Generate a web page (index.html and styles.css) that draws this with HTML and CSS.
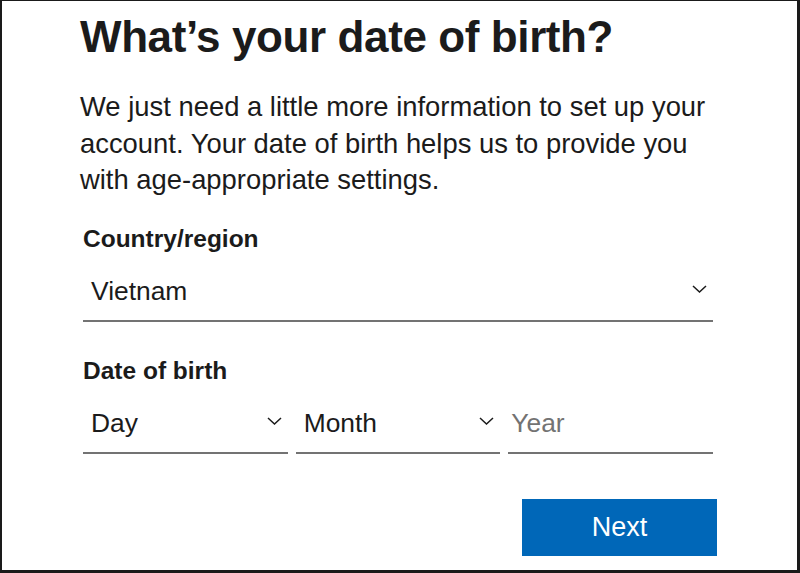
FILE: index.html
```html
<!DOCTYPE html>
<html lang="en">
<head>
<meta charset="utf-8">
<title>What's your date of birth?</title>
<link rel="stylesheet" href="styles.css">
</head>
<body>
<div class="frame">
  <h1 class="title">What’s your date of birth?</h1>
  <p class="intro">We just need a little more information to set up your account. Your date of birth helps us to provide you with age-appropriate settings.</p>
  <div class="form">
    <div class="label">Country/region</div>
    <div class="field field-wide">
      <span class="value">Vietnam</span>
      <svg class="chev" width="15" height="8" viewBox="0 0 15 8"><polyline points="1,1 7.5,7 14,1" fill="none" stroke="#1b1b1b" stroke-width="1.5"/></svg>
    </div>
    <div class="label label-dob">Date of birth</div>
    <div class="dob-row">
      <div class="field">
        <span class="value">Day</span>
        <svg class="chev" width="15" height="8" viewBox="0 0 15 8"><polyline points="1,1 7.5,7 14,1" fill="none" stroke="#1b1b1b" stroke-width="1.5"/></svg>
      </div>
      <div class="field">
        <span class="value">Month</span>
        <svg class="chev" width="15" height="8" viewBox="0 0 15 8"><polyline points="1,1 7.5,7 14,1" fill="none" stroke="#1b1b1b" stroke-width="1.5"/></svg>
      </div>
      <div class="field field-year">
        <span class="value placeholder">Year</span>
      </div>
    </div>
    <div class="actions">
      <button class="next" type="button">Next</button>
    </div>
  </div>
</div>
</body>
</html>
```
FILE: styles.css
```css
html, body {
  margin: 0;
  padding: 0;
  background: #ffffff;
}
body {
  font-family: "Liberation Sans", Arial, sans-serif;
  color: #1b1b1b;
}
.frame {
  box-sizing: border-box;
  width: 800px;
  height: 573px;
  border-style: solid;
  border-color: #1a1a1a;
  border-width: 1px 3px 3px 2px;
  padding: 10px 0 0 78px;
  overflow: hidden;
}
.title {
  margin: 0;
  font-size: 44px;
  line-height: 52px;
  font-weight: 700;
  letter-spacing: -0.4px;
}
.intro {
  margin: 26px 0 0 0;
  width: 660px;
  font-size: 27.4px;
  line-height: 36.5px;
}
.form {
  margin-left: 3px;
  width: 630px;
}
.label {
  margin-top: 25px;
  font-size: 24.5px;
  line-height: 30px;
  font-weight: 700;
}
.label-dob {
  margin-top: 34px;
}
.field {
  margin-top: 13px;
  display: flex;
  align-items: center;
  justify-content: space-between;
  padding: 6px 6px 11px 8px;
  border-bottom: 2px solid #737373;
  font-size: 26.4px;
  line-height: 36px;
}
.chev {
  display: block;
  margin-top: -4px;
}
.dob-row {
  display: grid;
  grid-template-columns: 1fr 1fr 1fr;
  gap: 8px;
}
.field-year {
  padding-left: 3px;
}
.placeholder {
  color: #737373;
}
.actions {
  display: flex;
  justify-content: flex-end;
  width: 634px;
  margin-top: 45px;
}
.next {
  width: 195px;
  height: 57px;
  border: none;
  background: #0067b8;
  color: #ffffff;
  font-family: "Liberation Sans", Arial, sans-serif;
  font-size: 27px;
  padding: 0;
  cursor: pointer;
}
```
